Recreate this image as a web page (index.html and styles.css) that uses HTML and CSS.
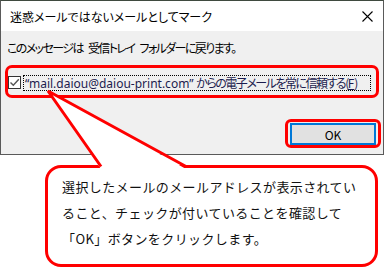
FILE: index.html
```html
<!DOCTYPE html>
<html lang="ja">
<head>
  <meta charset="UTF-8">
  <meta name="viewport" content="width=device-width, initial-scale=1.0">
  <title>迷惑メールではないメールとしてマーク</title>
  <link rel="stylesheet" href="styles.css">
</head>
<body>
  <div class="screen">
    <div class="dialog">
      <div class="titlebar">
        <span class="title">迷惑メールではないメールとしてマーク</span>
        <svg class="close" width="11" height="11" viewBox="0 0 11 11">
          <path d="M0.5 0.5 L10.5 10.5 M10.5 0.5 L0.5 10.5" stroke="#000" stroke-width="1.1" fill="none"/>
        </svg>
      </div>
      <div class="content">
        <p class="msg">このメッセージは 受信トレイ フォルダーに戻ります。</p>
        <label class="trust">
          <span class="check">
            <svg width="11" height="11" viewBox="0 0 11 11">
              <path d="M1.5 5.5 L4.3 8.3 L9.8 2.2" stroke="#555" stroke-width="1.4" fill="none"/>
            </svg>
          </span>
          <span class="trust-text"><span class="addr">“mail.daiou@daiou-print.com”</span> <span class="jp">からの電子メールを常に信頼する(<u>F</u>)</span></span>
        </label>
        <div class="actions">
          <button class="ok">OK</button>
        </div>
      </div>
    </div>

    <!-- annotation overlays -->
    <div class="mark mark-trust"></div>
    <div class="mark mark-ok"></div>
    <div class="callout">
      選択したメールのメールアドレスが表示されてい<br>
      ること、チェックが付いていることを確認して<br>
      「OK」ボタンをクリックします。
    </div>
    <svg class="pointer" width="385" height="268" viewBox="0 0 385 268">
      <polygon points="48,91 101,169 186,169" fill="#fff"/>
      <polyline points="101,166.5 48,91 186,166.5" fill="none" stroke="#f00" stroke-width="3" stroke-linejoin="miter"/>
    </svg>
  </div>
</body>
</html>
```

FILE: styles.css
```css
body {
  margin: 0;
  background-color: #fff;
  font-family: "Noto Sans CJK JP", "Noto Sans", sans-serif;
  color: #000;
}
.screen {
  position: relative;
  width: 385px;
  height: 268px;
  overflow: hidden;
}
.dialog {
  width: 384px;
  height: 155px;
  box-sizing: border-box;
  border: 1px solid #5a5a5a;
  border-top-color: #3f4a3f;
  display: flex;
  flex-direction: column;
}
.titlebar {
  height: 30px;
  background-color: #fff;
  display: flex;
  align-items: center;
  justify-content: space-between;
  padding: 0 10px 0 9px;
  flex-shrink: 0;
}
.title {
  font-size: 12px;
  font-feature-settings: "palt";
}
.close {
  display: block;
}
.content {
  flex: 1;
  background-color: #f0f0f0;
  padding: 9px 7px 0 6px;
}
.msg {
  margin: 0;
  font-size: 12px;
  line-height: 16px;
  letter-spacing: -1.6px;
  word-spacing: 4px;
  font-feature-settings: "palt";
  white-space: pre;
}
.trust {
  display: flex;
  align-items: center;
  margin-top: 19px;
  height: 15px;
}
.check {
  width: 11px;
  height: 11px;
  margin-left: 1px;
  border: 1px solid #333;
  background-color: #fff;
  display: flex;
}
.trust-text {
  margin-left: 2px;
  padding: 0 1px;
  border: 1px dotted #000;
  font-size: 12px;
  line-height: 13px;
  color: #1c1c4e;
  white-space: nowrap;
  width: 348px;
  box-sizing: border-box;
  overflow: hidden;
}
.addr {
  font-family: "Noto Sans", "Noto Sans CJK JP", sans-serif;
}
.jp {
  font-feature-settings: "palt";
  letter-spacing: -1.5px;
}
.jp u {
  letter-spacing: 0;
}
.actions {
  display: flex;
  justify-content: flex-end;
  margin-top: 33px;
}
.ok {
  width: 86px;
  height: 22px;
  box-sizing: border-box;
  border: 2px solid #0078d7;
  background-color: #e1e1e1;
  font-family: inherit;
  font-size: 12px;
  color: #000;
  padding: 0;
}
.mark {
  position: absolute;
  box-sizing: border-box;
  border: 3px solid #f00;
}
.mark-trust {
  left: 5px;
  top: 65px;
  width: 374px;
  height: 33px;
  border-radius: 7px;
}
.mark-ok {
  left: 285px;
  top: 119px;
  width: 96px;
  height: 29px;
  border-radius: 6px;
}
.callout {
  position: absolute;
  left: 45px;
  top: 165px;
  width: 333px;
  height: 102px;
  box-sizing: border-box;
  border: 3px solid #f00;
  border-radius: 16px;
  background-color: #fff;
  padding: 6px 0 0 14px;
  font-size: 13px;
  line-height: 26px;
  letter-spacing: 0.4px;
  color: #111;
  white-space: nowrap;
}
.pointer {
  position: absolute;
  left: 0;
  top: 0;
}
```
